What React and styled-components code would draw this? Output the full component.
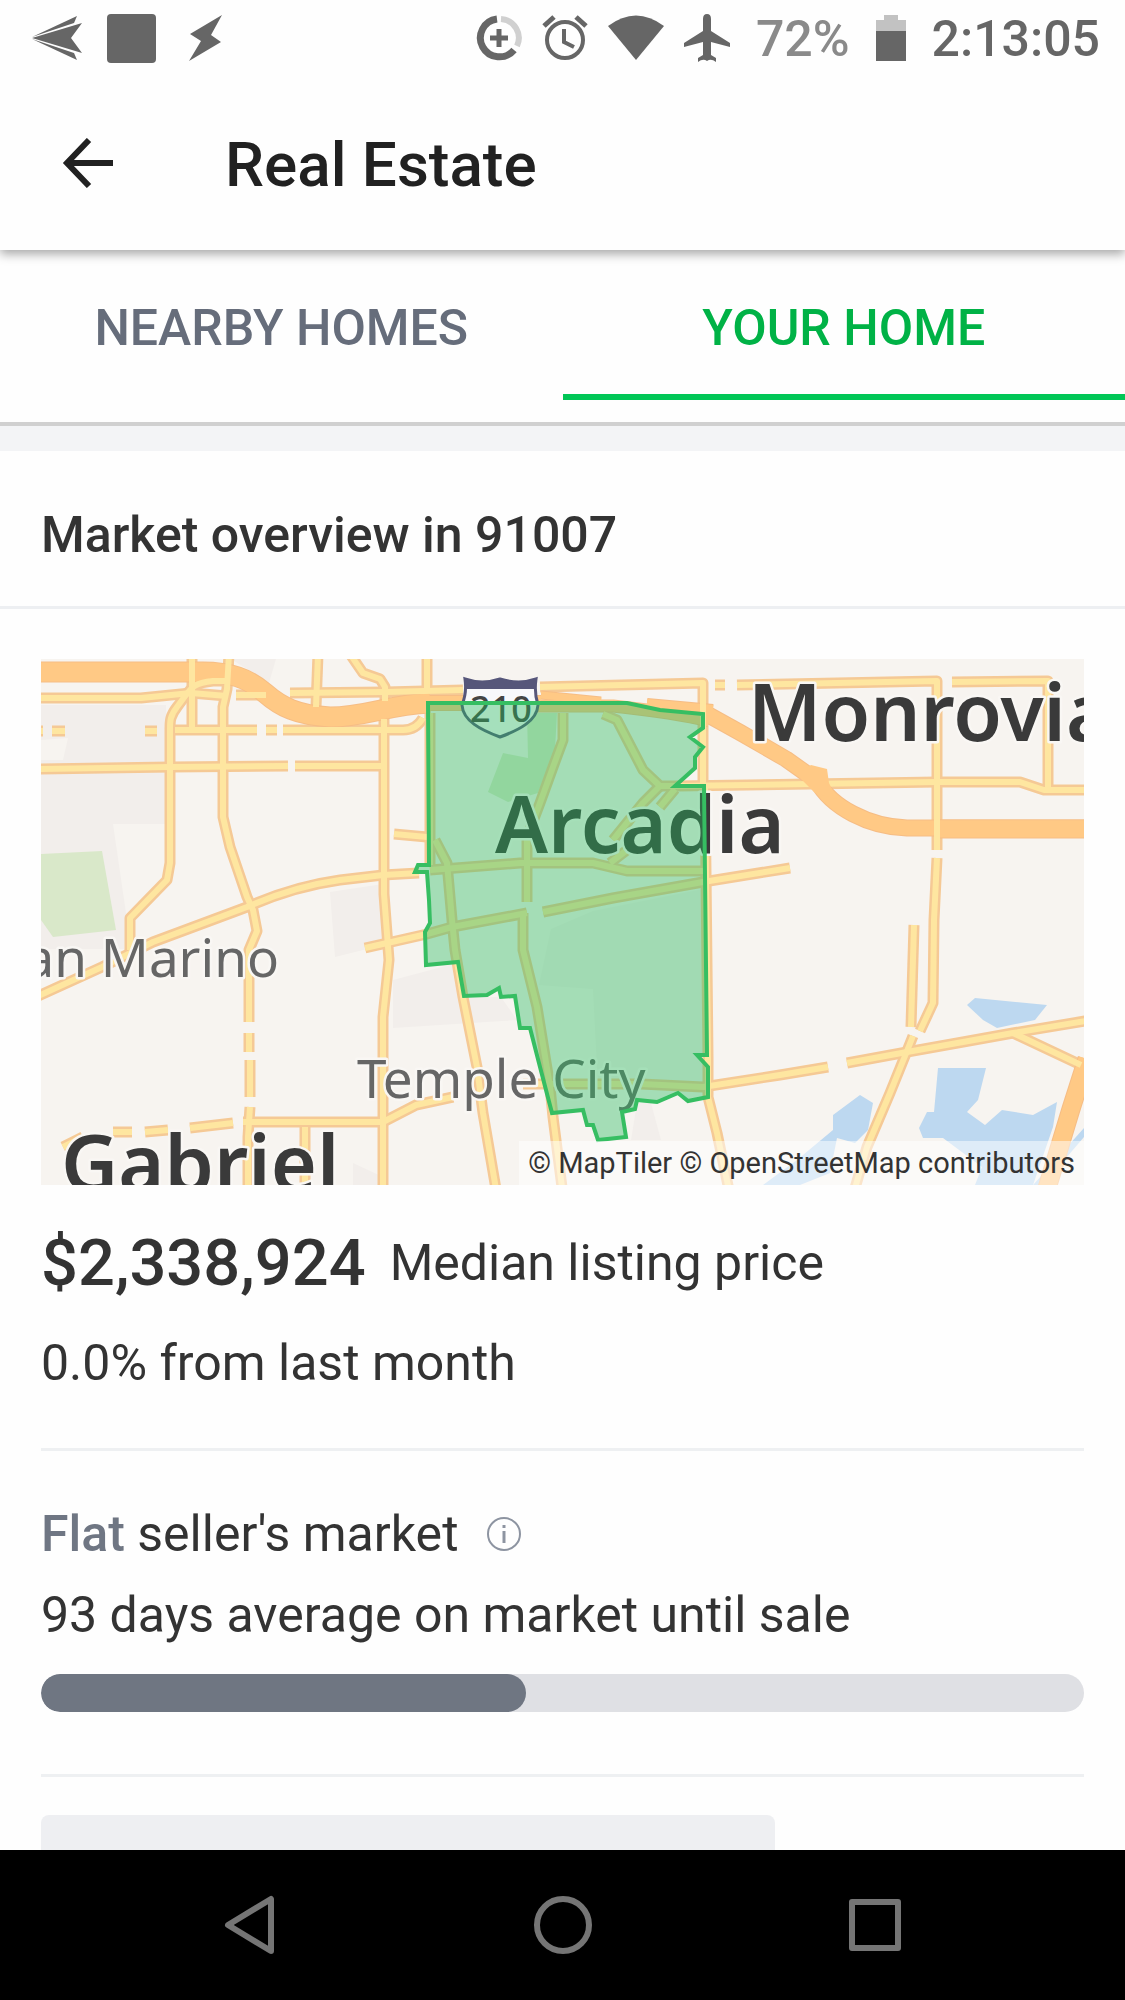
import React from 'react';
import styled, { createGlobalStyle } from 'styled-components';

const tabs = ['NEARBY HOMES', 'YOUR HOME'];

// orange freeways: [path, width]
const freeways = [
  ['M-5 13H156C190 12 208 20 224 34S256 56 289 58C325 58 345 46 389 44', 19],
  ['M380 44H500', 14],
  ['M500 36L560 42', 7],
  ['M495 47H572C600 50 640 55 668 62', 11],
  ['M606 44L672 50', 8],
  ['M664 54L700 74L745 100L776 122C790 148 828 168 866 169H1050', 15],
  ['M896 170H1050', 17],
  ['M1046 400L1030 450L1004 536', 17],
];

const roads = [
  'M-5 39H100L150 34L186 37',
  'M195 36H225',
  'M249 34L345 33L422 31',
  'M499 28L662 24V126',
  'M674 26H684',
  'M696 26L896 22V191',
  'M911 23L1007 22V130',
  'M636 127L896 123H979L1003 131H1050',
  'M896 199L893 261L892 344L879 372',
  'M873 266L870 368',
  'M872 377L866 392L849 434L826 488L812 536',
  'M482 425H600L662 428L739 416L787 408',
  'M806 404L866 393L922 383L972 374L1050 361',
  'M972 374L1040 406',
  'M151 -5V68',
  'M186 22H172C150 24 150 30 136 48C129 57 129 62 129 70V204L126 221L89 259V291',
  'M188 -5L186 30L182 48V158L189 188L206 238L212 251L216 272L208 291V363',
  'M208 374V393',
  'M209 401V438',
  'M209 448L207 478V536',
  'M-5 72H2',
  'M11 72H24',
  'M104 72H116',
  'M134 71H216',
  'M225 71H236',
  'M242 71H362C372 71 378 66 382 59',
  'M-5 110L129 108L247 107',
  'M254 107H342',
  'M277 -5L275 48',
  'M309 -5L322 14L339 20L344 28V42',
  'M343 60V235L348 301L342 358V536',
  'M386 -5V31',
  'M353 175L386 178',
  'M378 214L342 216L299 221C270 225 240 233 206 248L112 283L61 308L-5 338',
  'M324 289L386 275L411 268L486 254',
  'M149 469L192 464',
  'M202 463H342L375 446L412 438',
  'M104 473L127 471',
  'M72 473H91',
  'M22 488L42 478',
  'M264 468V536',
  'M522 54V81L512 108L499 144L486 178V243',
  'M562 55L576 61L602 111L619 127H636',
  'M619 127L602 144L572 181',
  'M634 130L619 148',
  'M389 211L479 204H552L586 212H662',
  'M569 204L586 191',
  'M502 253L572 239L662 223L749 209',
  'M394 181L406 204L411 261L414 291L422 338L436 408L442 454L456 536',
  'M482 254V291L496 348L509 428L512 458L522 536',
  'M664 124L667 398V438L676 474L689 536',
  'M389 54V206',
];

const water = [
  '926,346 934,339 1006,346 994,361 956,369 942,361',
  '897,409 945,409 937,441 926,453 944,466 961,451 992,456 1016,443 1012,468 992,526 934,526 941,508 902,479 882,479 878,469 886,453 893,453',
  '819,436 832,444 827,471 814,484 796,479 789,514 759,526 722,526 756,501 792,471 792,456',
  '1043,469 1026,488 992,526 1002,526 1043,478',
];

const zipArea =
  '387,44 459,44 586,44 619,51 662,55 662,69 649,78 662,88 654,98 654,109 634,127 663,127 666,396 656,396 667,408 667,438 647,442 637,434 616,443 596,441 594,450 581,453 585,478 557,481 552,466 546,466 542,451 511,454 499,408 489,369 479,369 474,337 460,338 458,329 446,336 423,337 417,303 385,306 384,273 389,264 388,241 386,213 374,213 377,206 388,206';

function AreaMap() {
  return (
    <MapSvg
      viewBox="0 0 1043 526"
      preserveAspectRatio="xMidYMid slice"
      role="img"
      aria-label="Map of 91007"
    >
      <rect width="1043" height="526" fill="#f7f4f0" />
      <g fill="#f2eeeb">
        <polygon points="0,46 125,46 125,165 72,165 86,261 86,290 0,290" />
        <polygon points="289,233 342,225 342,286 294,298" />
        <polygon points="352,321 416,304 422,338 460,338 476,361 352,369" />
        <polygon points="510,270 552,252 662,230 662,428 557,428 552,330 498,326" />
        <polygon points="596,444 610,444 620,481 590,481" />
        <polygon points="312,504 342,518 342,526 312,526" />
        <polygon points="235,0 190,0 228,24" />
      </g>
      <g fill="#f7f4f0">
        <polygon points="0,81 27,79 22,101 0,101" />
      </g>
      <g fill="#d9e8c9">
        <polygon points="0,195 61,192 75,271 12,278 0,261" />
        <polygon points="486,54 516,54 514,91 497,134 467,143 447,133 462,94 487,99" />
      </g>
      <g fill="#bdd8f0">
        {water.map(points => (
          <polygon key={points} points={points} />
        ))}
      </g>

      <g fill="none" strokeLinejoin="round">
        {roads.map(d => (
          <path key={d} d={d} stroke="#f5c995" strokeWidth="11" />
        ))}
        {freeways.map(([d, width]) => (
          <path key={d} d={d} stroke="#f6bd85" strokeWidth={width + 2} />
        ))}
        {freeways.map(([d, width]) => (
          <path key={d} d={d} stroke="#ffc985" strokeWidth={width} />
        ))}
        {roads.map(d => (
          <path key={d} d={d} stroke="#fee6a0" strokeWidth="6" />
        ))}
      </g>
      <polygon points="756,116 770,106 786,110 788,124 796,140 774,134" fill="#ffc985" />

      <path
        d="M424 20Q441 26 459 20Q478 26 495 20Q493 34 497 46C496 62 478 71 459 78C440 71 422 62 421 46Q426 34 424 20Z"
        fill="#f8f8fb"
        stroke="#56567a"
        strokeWidth="3"
      />
      <path d="M424 20Q441 26 459 20Q478 26 495 20V30H424Z" fill="#56567a" />
      <ShieldText x="460" y="63">
        210
      </ShieldText>

      <CityText x="707" y="82">
        Monrovia
      </CityText>
      <CityText x="454" y="194">
        Arcadia
      </CityText>
      <CityText x="20" y="533">
        Gabriel
      </CityText>
      <TownText x="238" y="318" textAnchor="end">
        an Marino
      </TownText>
      <TownText x="316" y="439">
        Temple City
      </TownText>

      <polygon
        points={zipArea}
        fill="#28bc5f"
        fillOpacity="0.4"
        stroke="#36be62"
        strokeWidth="4"
      />
    </MapSvg>
  );
}

function StatusIcons() {
  return (
    <StatusGroup $gap={25}>
      <svg width="50" height="44" viewBox="0 0 50 44" fill="#666">
        <path d="M0 22L50 7L39 22L50 37Z" />
        <path d="M0 21L45 0L42 7Z" />
        <path d="M0 23L45 44L42 37Z" />
      </svg>
      <svg width="49" height="49" viewBox="0 0 49 49" fill="#666">
        <rect width="49" height="49" rx="4" />
      </svg>
      <svg width="50" height="48" viewBox="0 0 50 48" fill="#666">
        <path d="M41 1L30 21L40 28L8 47L20 27L9 20Z" />
      </svg>
    </StatusGroup>
  );
}

function SystemIcons() {
  return (
    <StatusGroup $gap={20}>
      <svg width="46" height="46" viewBox="0 0 46 46" fill="none">
        <path d="M21 4A19 19 0 1 0 38 35" stroke="#666" strokeWidth="7" />
        <path d="M25 4A19 19 0 0 1 41 31" stroke="#d0d0d0" strokeWidth="6" />
        <path d="M23 14V32M14 23H32" stroke="#666" strokeWidth="5" />
      </svg>
      <svg width="46" height="46" viewBox="0 0 46 46" fill="none" stroke="#666">
        <circle cx="23" cy="25" r="18" strokeWidth="4" />
        <path d="M2 11L12 2M44 11L34 2" strokeWidth="5" />
        <path d="M22 14V27L32 32" strokeWidth="4" />
      </svg>
      <svg width="56" height="46" viewBox="0 0 56 46" fill="#666">
        <path d="M0 11Q28 -10 56 11L28 45Z" />
      </svg>
      <svg width="46" height="48" viewBox="0 0 46 48" fill="#666">
        <path d="M23 0Q27 0 27 5V17L46 29V33L27 28V41L32 44V48Q27 44 23 47Q19 44 14 48V44L19 41V28L0 33V29L19 17V5Q19 0 23 0Z" />
      </svg>
    </StatusGroup>
  );
}

export default class App extends React.Component {
  constructor(props) {
    super(props);
    this.state = {
      currentTab: 'YOUR HOME',
    };
  }

  handleClickTab = tab => {
    this.setState({
      currentTab: tab,
    });
  };

  renderStatusBar() {
    return (
      <StatusBar>
        <StatusIcons />
        <StatusRight>
          <SystemIcons />
          <Battery>72%</Battery>
          <svg width="30" height="46" viewBox="0 0 30 46">
            <path d="M8 0H22V5H30V17H0V5H8Z" fill="#c2c2c2" />
            <path d="M0 16H30V46H0Z" fill="#666" />
          </svg>
          <Clock>2:13:05</Clock>
        </StatusRight>
      </StatusBar>
    );
  }

  renderTabs() {
    const { currentTab } = this.state;

    return (
      <Tabs role="tablist">
        {tabs.map(tab => (
          <Tab
            key={tab}
            role="tab"
            aria-selected={currentTab === tab}
            $active={currentTab === tab}
            onClick={() => this.handleClickTab(tab)}
          >
            {tab}
          </Tab>
        ))}
      </Tabs>
    );
  }

  renderMarket() {
    return (
      <Content>
        <MapBox>
          <AreaMap />
          <Attribution>
            <a href="#maptiler">© MapTiler</a>{' '}
            <a href="#osm">© OpenStreetMap contributors</a>
          </Attribution>
        </MapBox>
        <PriceRow>
          <Price>$2,338,924</Price>
          <Line>Median listing price</Line>
        </PriceRow>
        <Line>0.0% from last month</Line>
        <Divider />
        <MarketState>
          <Line>
            <Trend>Flat</Trend> seller's market
          </Line>
          <InfoButton aria-label="About the seller's market">
            <svg width="34" height="34" viewBox="0 0 34 34" fill="none" stroke="#8d94a1">
              <circle cx="17" cy="17" r="16" strokeWidth="2" />
              <path d="M17 14V26M17 8V11" strokeWidth="3" />
            </svg>
          </InfoButton>
        </MarketState>
        <Line>93 days average on market until sale</Line>
        <Bar role="progressbar" aria-label="Days on market" aria-valuenow={93} aria-valuemax={200}>
          <BarFill style={{ width: `${(93 / 200) * 100}%` }} />
        </Bar>
        <Divider />
        <Placeholder />
      </Content>
    );
  }

  render() {
    return (
      <Screen>
        <GlobalStyle />
        <Top>
          {this.renderStatusBar()}
          <AppBar>
            <BackButton aria-label="Back">
              <svg width="51" height="50" viewBox="0 0 51 50" fill="none" stroke="#212121">
                <path d="M27 2L5 25L27 48M5 25H51" strokeWidth="6" />
              </svg>
            </BackButton>
            <Title>Real Estate</Title>
          </AppBar>
        </Top>
        <Page>
          {this.renderTabs()}
          <Heading>Market overview in 91007</Heading>
          {this.renderMarket()}
        </Page>
        <NavBar>
          <NavButton aria-label="Back">
            <svg width="60" height="60" viewBox="0 0 60 60">
              <path d="M50 4V56L7 30Z" />
            </svg>
          </NavButton>
          <NavButton aria-label="Home">
            <svg width="60" height="60" viewBox="0 0 60 60">
              <circle cx="30" cy="30" r="26" />
            </svg>
          </NavButton>
          <NavButton aria-label="Recent apps">
            <svg width="60" height="60" viewBox="0 0 60 60">
              <rect x="7" y="7" width="46" height="46" />
            </svg>
          </NavButton>
        </NavBar>
      </Screen>
    );
  }
}

const GlobalStyle = createGlobalStyle`
  * {
    box-sizing: border-box;
  }
  body {
    margin: 0;
    background: #fefefe;
    color: #333;
    font-family: Roboto, sans-serif;
  }
  button {
    margin: 0;
    padding: 0;
    border: 0;
    background: none;
    font-family: inherit;
    cursor: pointer;
  }
  svg {
    display: block;
  }
`;

const Screen = styled.div`
  display: flex;
  flex-direction: column;
  height: 100vh;
`;

const Top = styled.header`
  position: relative;
  z-index: 1;
  flex: none;
  background: #fefefe;
  box-shadow: 0 4px 10px rgba(0, 0, 0, 0.35);
`;

const StatusBar = styled.div`
  display: flex;
  align-items: center;
  justify-content: space-between;
  height: 76px;
  padding: 0 25px 0 32px;
  font-size: 50px;
  font-weight: 500;
`;

const StatusGroup = styled.div`
  display: flex;
  align-items: center;
  gap: ${p => p.$gap}px;
`;

const StatusRight = styled.div`
  display: flex;
  align-items: center;
  gap: 26px;
`;

const Battery = styled.span`
  padding-top: 2px;
  color: #8a8a8a;
`;

const Clock = styled.span`
  padding-top: 2px;
  color: #666;
`;

const AppBar = styled.div`
  display: flex;
  align-items: center;
  height: 174px;
  padding: 0 62px;
`;

const BackButton = styled.button`
  width: 163px;
`;

const Title = styled.h1`
  margin: 0;
  padding-top: 2px;
  color: #212121;
  font-size: 62px;
  font-weight: 500;
`;

const Page = styled.main`
  flex: 1;
  min-height: 0;
  overflow: hidden;
`;

const Tabs = styled.div`
  display: flex;
  padding-bottom: 22px;
  border-bottom: 4px solid #d0d0d0;
`;

const Tab = styled.button`
  flex: 1;
  height: 150px;
  padding-top: 12px;
  border-bottom: 6px solid ${p => (p.$active ? '#00c656' : 'transparent')};
  color: ${p => (p.$active ? '#00b246' : '#666d7b')};
  font-size: 50px;
  font-weight: 500;
`;

const Heading = styled.h2`
  margin: 0;
  padding: 54px 41px 41px;
  border-top: 25px solid #f3f4f6;
  border-bottom: 3px solid #edeff2;
  font-size: 50px;
  font-weight: 500;
  line-height: 60px;
`;

const Content = styled.section`
  display: flex;
  flex-direction: column;
  padding: 50px 41px 0;
`;

const MapBox = styled.div`
  position: relative;
  height: 526px;
  overflow: hidden;
`;

const MapSvg = styled.svg`
  width: 100%;
  height: 100%;
`;

const MapText = styled.text`
  font-family: 'Noto Sans', 'Open Sans', sans-serif;
  stroke: #f9f7f4;
  stroke-linejoin: round;
  paint-order: stroke;
`;

const CityText = styled(MapText)`
  fill: #3a3a3a;
  stroke-width: 5px;
  font-size: 79px;
  font-weight: 600;
`;

const TownText = styled(MapText)`
  fill: #666;
  stroke-width: 5px;
  font-size: 53px;
`;

const ShieldText = styled(MapText)`
  fill: #444;
  stroke: none;
  font-size: 36px;
  font-weight: 500;
  text-anchor: middle;
`;

const Attribution = styled.div`
  position: absolute;
  right: 0;
  bottom: 0;
  padding: 0 9px;
  background: rgba(255, 255, 255, 0.5);
  font-size: 29px;
  line-height: 44px;

  a {
    color: #333;
    text-decoration: none;
  }
`;

const PriceRow = styled.div`
  display: flex;
  align-items: center;
  gap: 24px;
  margin: 40px 0 32px;
  line-height: 76px;
`;

const Price = styled.strong`
  font-size: 65px;
  font-weight: 500;
`;

const Line = styled.span`
  font-size: 50px;
  line-height: 60px;
`;

const Divider = styled.hr`
  width: 100%;
  height: 3px;
  margin: 55px 0 53px;
  border: 0;
  background: #eef0f2;
`;

const MarketState = styled.div`
  display: flex;
  align-items: center;
  gap: 29px;
  margin-bottom: 21px;
`;

const Trend = styled.b`
  color: #6f7683;
  font-weight: 500;
`;

const InfoButton = styled.button`
  width: 34px;
`;

const Bar = styled.div`
  height: 38px;
  margin: 29px 0 7px;
  border-radius: 19px;
  background: #dfe0e4;
  overflow: hidden;
`;

const BarFill = styled.div`
  height: 100%;
  border-radius: 19px;
  background: #6f7682;
`;

const Placeholder = styled.div`
  width: 734px;
  max-width: 100%;
  height: 60px;
  margin-top: -15px;
  border-radius: 8px;
  background: #eeeff2;
`;

const NavBar = styled.nav`
  display: flex;
  flex: none;
  align-items: center;
  justify-content: center;
  gap: 252px;
  height: 150px;
  background: #000;
`;

const NavButton = styled.button`
  svg {
    fill: none;
    stroke: #757575;
    stroke-width: 6px;
    stroke-linejoin: round;
  }
`;
